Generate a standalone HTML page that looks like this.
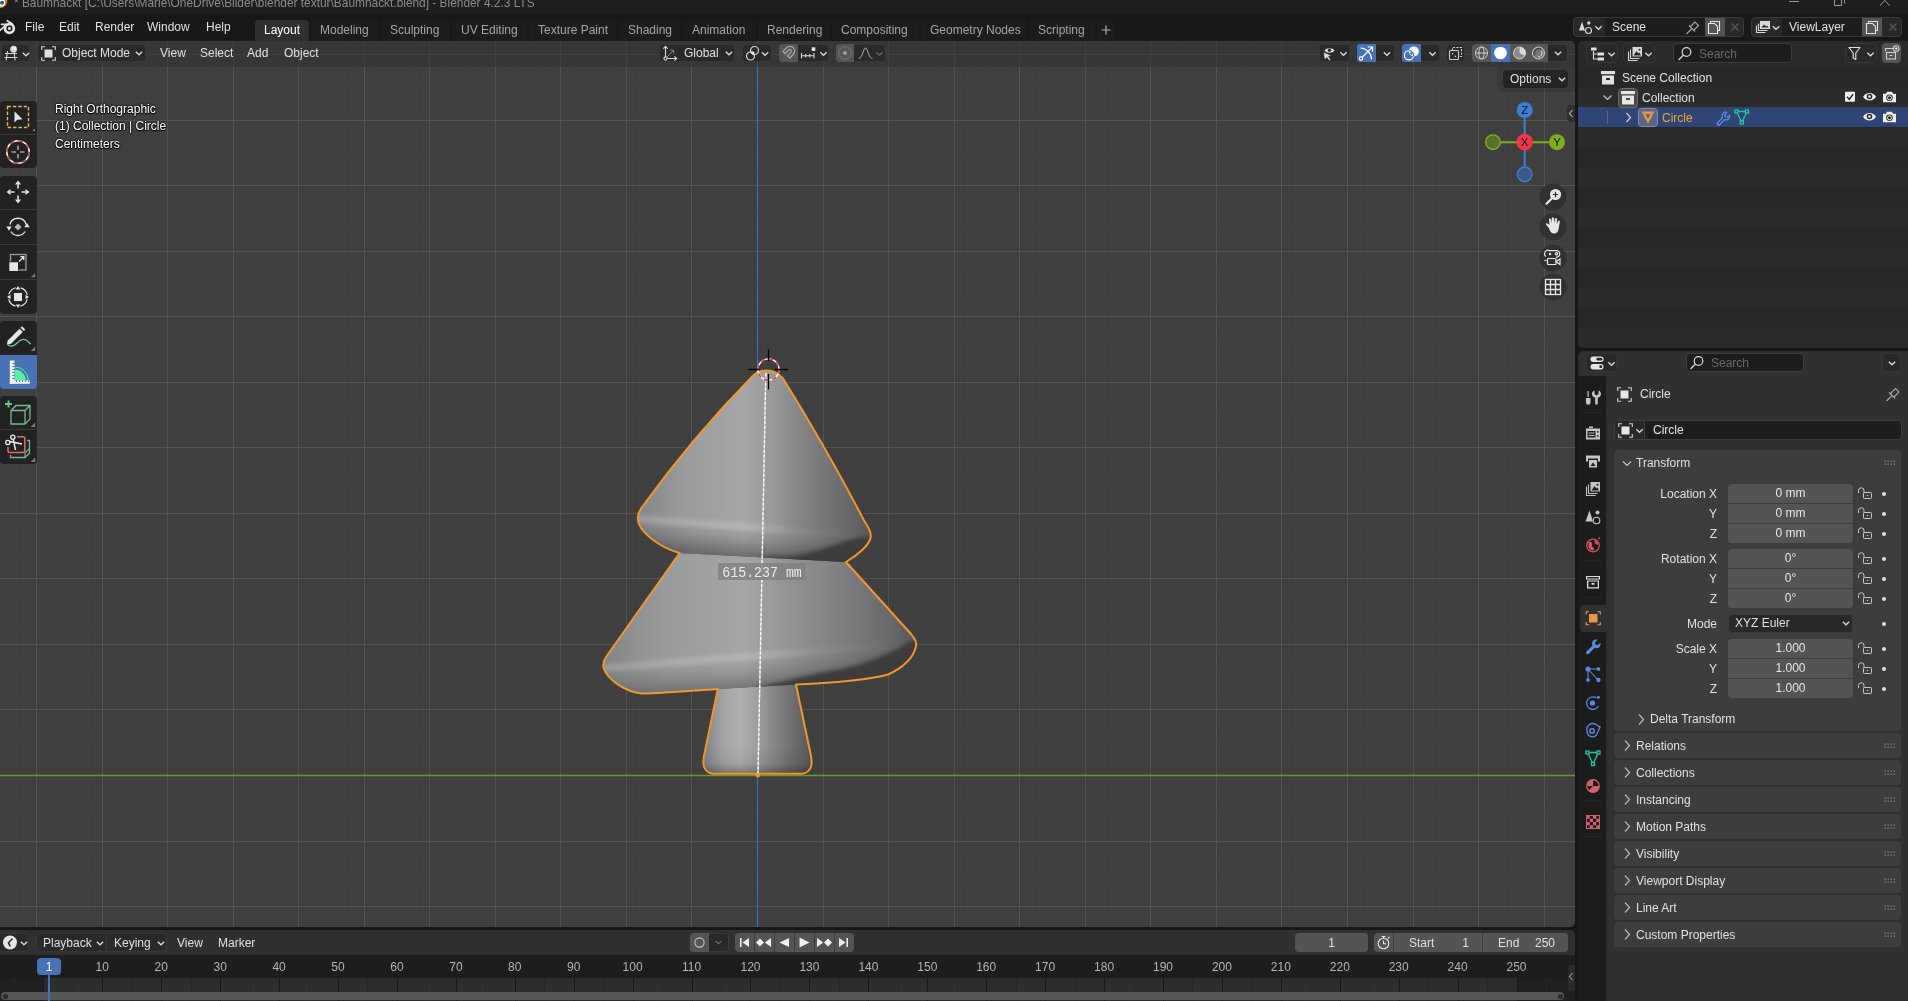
<!DOCTYPE html>
<html>
<head>
<meta charset="utf-8">
<title>Blender</title>
<style>
*{box-sizing:border-box;margin:0;padding:0}
html,body{width:1908px;height:1001px;overflow:hidden;background:#161616}
body{will-change:transform;position:relative;font-family:"Liberation Sans",sans-serif;font-size:12px;color:#e6e6e6;line-height:1}
.abs{position:absolute}
.t{position:absolute;white-space:nowrap;line-height:14px;height:14px;color:#e0e0e0}
.g{color:#989898}
.sep{left:1583px;width:20px;height:1px;background:#262626}
.tabi{top:20px;height:20px;background:#1c1c1c;border-radius:4px 4px 0 0}
.tb{top:23px;color:#a6a6a6}
.tbg{background:#222;border-radius:4px}
.tbl{width:37px;height:1px;background:#3a3a3a}
.ov{color:#fff;text-shadow:0 0 2px #000,0 0 2px #000,0 1px 1px #000}
.btn{position:absolute;background:#292929;border:1px solid #363636;border-radius:4px}
.fld{position:absolute;background:#545454;text-align:center;line-height:19px;height:19px;color:#e6e6e6}
.dark{position:absolute;background:#1d1d1d;border:1px solid #3d3d3d;border-radius:4px}
svg{position:absolute;overflow:visible}
/* title + topbar */
#title{left:0;top:0;width:1908px;height:13.500px;background:#1e1e1e}
#topbar{left:0;top:14px;width:1908px;height:27px;background:#181818}
/* viewport */
#vp{left:0;top:41px;width:1575px;height:886px;background:#3f3f3f;border-radius:0 5px 5px 0;overflow:hidden}
#vphead{left:0;top:0;width:1575px;height:26px;background:rgba(48,48,48,.55)}
/* timeline */
#tl{left:0;top:930px;width:1575px;height:71px;background:#2b2b2b;border-radius:0 5px 0 0;overflow:hidden}
#tlhead{left:0;top:0;width:1575px;height:25px;background:#303030}
#tlruler{left:0;top:25px;width:1575px;height:23px;background:#1d1d1d}
/* outliner */
#ol{left:1578px;top:41px;width:330px;height:307px;background:#282828;border-radius:5px 0 0 5px;overflow:hidden}
#olhead{left:0;top:0;width:330px;height:26px;background:#2a2a2a}
/* properties */
#pr{left:1578px;top:351px;width:330px;height:650px;background:#303030;border-radius:5px 0 0 0;overflow:hidden}
#prtabs{left:0;top:25px;width:28px;height:625px;background:#1c1c1c}
.panel{position:absolute;left:36px;width:287px;height:25px;background:#3d3d3d;border-radius:4px}
</style>
</head>
<body>
<svg width="0" height="0" style="position:absolute"><defs>
<symbol id="chev" overflow="visible"><path d="M.8 .8L4 3.8L7.2 .8" stroke="#dcdcdc" stroke-width="1.3" fill="none"/></symbol>
<symbol id="chevr" overflow="visible"><path d="M1 .5L5.500 5.500L1 10.500" stroke="#b8b8b8" stroke-width="1.200" fill="none"/></symbol>
</defs></svg>
<div id="title" class="abs"></div>
<div id="topbar" class="abs"></div>
<div id="vp" class="abs">
<svg style="left:0;top:0" width="1575" height="886" viewBox="0 41 1575 886">
<path d="M3.5 41V927M10.5 41V927M16.5 41V927M23.5 41V927M29.5 41V927M43.5 41V927M49.5 41V927M56.5 41V927M62.5 41V927M69.5 41V927M75.5 41V927M82.5 41V927M88.5 41V927M95.5 41V927M108.5 41V927M115.5 41V927M121.5 41V927M128.5 41V927M134.5 41V927M141.5 41V927M147.5 41V927M154.5 41V927M160.5 41V927M174.5 41V927M180.5 41V927M187.5 41V927M193.5 41V927M200.5 41V927M206.5 41V927M213.5 41V927M219.5 41V927M226.5 41V927M239.5 41V927M246.5 41V927M252.5 41V927M259.5 41V927M265.5 41V927M272.5 41V927M278.5 41V927M285.5 41V927M292.5 41V927M305.5 41V927M311.5 41V927M318.5 41V927M324.5 41V927M331.5 41V927M337.5 41V927M344.5 41V927M351.5 41V927M357.5 41V927M370.5 41V927M377.5 41V927M383.5 41V927M390.5 41V927M396.5 41V927M403.5 41V927M410.5 41V927M416.5 41V927M423.5 41V927M436.5 41V927M442.5 41V927M449.5 41V927M455.5 41V927M462.5 41V927M469.5 41V927M475.5 41V927M482.5 41V927M488.5 41V927M501.5 41V927M508.5 41V927M514.5 41V927M521.5 41V927M528.5 41V927M534.5 41V927M541.5 41V927M547.5 41V927M554.5 41V927M567.5 41V927M573.5 41V927M580.5 41V927M587.5 41V927M593.5 41V927M600.5 41V927M606.5 41V927M613.5 41V927M619.5 41V927M632.5 41V927M639.5 41V927M646.5 41V927M652.5 41V927M659.5 41V927M665.5 41V927M672.5 41V927M678.5 41V927M685.5 41V927M698.5 41V927M705.5 41V927M711.5 41V927M718.5 41V927M724.5 41V927M731.5 41V927M737.5 41V927M744.5 41V927M750.5 41V927M764.5 41V927M770.5 41V927M777.5 41V927M783.5 41V927M790.5 41V927M796.5 41V927M803.5 41V927M809.5 41V927M816.5 41V927M829.5 41V927M836.5 41V927M842.5 41V927M849.5 41V927M855.5 41V927M862.5 41V927M868.5 41V927M875.5 41V927M882.5 41V927M895.5 41V927M901.5 41V927M908.5 41V927M914.5 41V927M921.5 41V927M927.5 41V927M934.5 41V927M941.5 41V927M947.5 41V927M960.5 41V927M967.5 41V927M973.5 41V927M980.5 41V927M986.5 41V927M993.5 41V927M1000.5 41V927M1006.5 41V927M1013.5 41V927M1026.5 41V927M1032.5 41V927M1039.5 41V927M1045.5 41V927M1052.5 41V927M1059.5 41V927M1065.5 41V927M1072.5 41V927M1078.5 41V927M1091.5 41V927M1098.5 41V927M1104.5 41V927M1111.5 41V927M1118.5 41V927M1124.5 41V927M1131.5 41V927M1137.5 41V927M1144.5 41V927M1157.5 41V927M1163.5 41V927M1170.5 41V927M1177.5 41V927M1183.5 41V927M1190.5 41V927M1196.5 41V927M1203.5 41V927M1209.5 41V927M1222.5 41V927M1229.5 41V927M1236.5 41V927M1242.5 41V927M1249.5 41V927M1255.5 41V927M1262.5 41V927M1268.5 41V927M1275.5 41V927M1288.5 41V927M1295.5 41V927M1301.5 41V927M1308.5 41V927M1314.5 41V927M1321.5 41V927M1327.5 41V927M1334.5 41V927M1340.5 41V927M1354.5 41V927M1360.5 41V927M1367.5 41V927M1373.5 41V927M1380.5 41V927M1386.5 41V927M1393.5 41V927M1399.5 41V927M1406.5 41V927M1419.5 41V927M1426.5 41V927M1432.5 41V927M1439.5 41V927M1445.5 41V927M1452.5 41V927M1458.5 41V927M1465.5 41V927M1471.5 41V927M1485.5 41V927M1491.5 41V927M1498.5 41V927M1504.5 41V927M1511.5 41V927M1517.5 41V927M1524.5 41V927M1530.5 41V927M1537.5 41V927M1550.5 41V927M1557.5 41V927M1563.5 41V927M1570.5 41V927M0 41.5H1575M0 47.5H1575M0 61.5H1575M0 67.5H1575M0 74.5H1575M0 80.5H1575M0 87.5H1575M0 93.5H1575M0 100.5H1575M0 106.5H1575M0 113.5H1575M0 126.5H1575M0 133.5H1575M0 139.5H1575M0 146.5H1575M0 152.5H1575M0 159.5H1575M0 165.5H1575M0 172.5H1575M0 178.5H1575M0 192.5H1575M0 198.5H1575M0 205.5H1575M0 211.5H1575M0 218.5H1575M0 224.5H1575M0 231.5H1575M0 237.5H1575M0 244.5H1575M0 257.5H1575M0 264.5H1575M0 270.5H1575M0 277.5H1575M0 283.5H1575M0 290.5H1575M0 296.5H1575M0 303.5H1575M0 310.5H1575M0 323.5H1575M0 329.5H1575M0 336.5H1575M0 342.5H1575M0 349.5H1575M0 355.5H1575M0 362.5H1575M0 369.5H1575M0 375.5H1575M0 388.5H1575M0 395.5H1575M0 401.5H1575M0 408.5H1575M0 414.5H1575M0 421.5H1575M0 428.5H1575M0 434.5H1575M0 441.5H1575M0 454.5H1575M0 460.5H1575M0 467.5H1575M0 473.5H1575M0 480.5H1575M0 487.5H1575M0 493.5H1575M0 500.5H1575M0 506.5H1575M0 519.5H1575M0 526.5H1575M0 532.5H1575M0 539.5H1575M0 546.5H1575M0 552.5H1575M0 559.5H1575M0 565.5H1575M0 572.5H1575M0 585.5H1575M0 591.5H1575M0 598.5H1575M0 605.5H1575M0 611.5H1575M0 618.5H1575M0 624.5H1575M0 631.5H1575M0 637.5H1575M0 650.5H1575M0 657.5H1575M0 664.5H1575M0 670.5H1575M0 677.5H1575M0 683.5H1575M0 690.5H1575M0 696.5H1575M0 703.5H1575M0 716.5H1575M0 723.5H1575M0 729.5H1575M0 736.5H1575M0 742.5H1575M0 749.5H1575M0 755.5H1575M0 762.5H1575M0 768.5H1575M0 782.5H1575M0 788.5H1575M0 795.5H1575M0 801.5H1575M0 808.5H1575M0 814.5H1575M0 821.5H1575M0 827.5H1575M0 834.5H1575M0 847.5H1575M0 854.5H1575M0 860.5H1575M0 867.5H1575M0 873.5H1575M0 880.5H1575M0 886.5H1575M0 893.5H1575M0 900.5H1575M0 913.5H1575M0 919.5H1575M0 926.5H1575" stroke="#414141" stroke-width="1" fill="none" shape-rendering="crispEdges"/>
<path d="M36.5 41V927M102.5 41V927M167.5 41V927M233.5 41V927M298.5 41V927M364.5 41V927M429.5 41V927M495.5 41V927M560.5 41V927M626.5 41V927M691.5 41V927M823.5 41V927M888.5 41V927M954.5 41V927M1019.5 41V927M1085.5 41V927M1150.5 41V927M1216.5 41V927M1281.5 41V927M1347.5 41V927M1413.5 41V927M1478.5 41V927M1544.5 41V927M0 54.5H1575M0 120.5H1575M0 185.5H1575M0 251.5H1575M0 316.5H1575M0 382.5H1575M0 447.5H1575M0 513.5H1575M0 578.5H1575M0 644.5H1575M0 709.5H1575M0 841.5H1575M0 906.5H1575" stroke="#535353" stroke-width="1" fill="none" shape-rendering="crispEdges"/>
<path d="M0 775.5H1575" stroke="#6a9a22" stroke-width="1.3" fill="none"/>
<path d="M757.5 41V927" stroke="#3a6db3" stroke-width="1.3" fill="none"/>
<defs>
<linearGradient id="gU" gradientUnits="userSpaceOnUse" x1="637" y1="0" x2="871" y2="0">
<stop offset="0" stop-color="#858688"/><stop offset=".2" stop-color="#999a9c"/><stop offset=".45" stop-color="#a6a7a9"/><stop offset=".58" stop-color="#98999b"/><stop offset=".75" stop-color="#7d7d80"/><stop offset=".92" stop-color="#666669"/><stop offset="1" stop-color="#58585b"/>
</linearGradient>
<linearGradient id="gL" gradientUnits="userSpaceOnUse" x1="603" y1="0" x2="916" y2="0">
<stop offset="0" stop-color="#848587"/><stop offset=".2" stop-color="#999a9c"/><stop offset=".45" stop-color="#a5a6a8"/><stop offset=".56" stop-color="#97989a"/><stop offset=".75" stop-color="#808083"/><stop offset=".92" stop-color="#69696c"/><stop offset="1" stop-color="#58585b"/>
</linearGradient>
<linearGradient id="gT" gradientUnits="userSpaceOnUse" x1="703" y1="0" x2="812" y2="0">
<stop offset="0" stop-color="#7e7f82"/><stop offset=".18" stop-color="#a2a3a5"/><stop offset=".34" stop-color="#b0b1b3"/><stop offset=".5" stop-color="#9d9ea0"/><stop offset=".72" stop-color="#7c7c7f"/><stop offset=".92" stop-color="#626265"/><stop offset="1" stop-color="#545457"/>
</linearGradient>
<linearGradient id="gRimU" gradientUnits="userSpaceOnUse" x1="754" y1="503" x2="750" y2="556">
<stop offset="0" stop-color="#000" stop-opacity="0"/><stop offset=".5" stop-color="#000" stop-opacity="0"/><stop offset=".7" stop-color="#000" stop-opacity=".1"/><stop offset="1" stop-color="#000" stop-opacity=".33"/>
</linearGradient>
<linearGradient id="gHiU" gradientUnits="userSpaceOnUse" x1="637" y1="0" x2="850" y2="0"><stop offset="0" stop-color="#fff" stop-opacity=".5"/><stop offset=".5" stop-color="#fff" stop-opacity=".55"/><stop offset=".75" stop-color="#fff" stop-opacity=".15"/><stop offset="1" stop-color="#fff" stop-opacity="0"/></linearGradient>
<linearGradient id="gHiL" gradientUnits="userSpaceOnUse" x1="603" y1="0" x2="900" y2="0"><stop offset="0" stop-color="#fff" stop-opacity=".5"/><stop offset=".5" stop-color="#fff" stop-opacity=".55"/><stop offset=".75" stop-color="#fff" stop-opacity=".15"/><stop offset="1" stop-color="#fff" stop-opacity="0"/></linearGradient>
<filter id="bl2" x="-10%" y="-30%" width="120%" height="160%"><feGaussianBlur stdDeviation="2.200"/></filter>
<filter id="bl" x="-10%" y="-300%" width="120%" height="700%"><feGaussianBlur stdDeviation="2.600"/></filter>
<linearGradient id="gRimL" gradientUnits="userSpaceOnUse" x1="757" y1="632" x2="761.6" y2="690">
<stop offset="0" stop-color="#000" stop-opacity="0"/><stop offset=".45" stop-color="#000" stop-opacity="0"/><stop offset=".68" stop-color="#000" stop-opacity=".1"/><stop offset="1" stop-color="#000" stop-opacity=".33"/>
</linearGradient>
<radialGradient id="gDkU" gradientUnits="userSpaceOnUse" cx="866" cy="549" r="58" gradientTransform="translate(866 549) scale(1 .45) translate(-866 -549)">
<stop offset="0" stop-color="#2e2a2a" stop-opacity=".85"/><stop offset=".5" stop-color="#2e2a2a" stop-opacity=".5"/><stop offset="1" stop-color="#2e2a2a" stop-opacity="0"/>
</radialGradient>
<radialGradient id="gDkL" gradientUnits="userSpaceOnUse" cx="908" cy="668" r="70" gradientTransform="translate(905 668) rotate(-18) scale(1 .4) translate(-905 -668)">
<stop offset="0" stop-color="#2e2a2a" stop-opacity=".85"/><stop offset=".5" stop-color="#2e2a2a" stop-opacity=".5"/><stop offset="1" stop-color="#2e2a2a" stop-opacity="0"/>
</radialGradient>
<linearGradient id="gTb" gradientUnits="userSpaceOnUse" x1="0" y1="745" x2="0" y2="775">
<stop offset="0" stop-color="#000" stop-opacity="0"/><stop offset=".6" stop-color="#000" stop-opacity=".06"/><stop offset="1" stop-color="#000" stop-opacity=".35"/>
</linearGradient>
<clipPath id="cU"><path id="pU" d="M752.5 376.3C757 371.5 762 370.5 766.4 370.5C772 370.500 778 373 783 378.500Q826 447.400 863.5 519.5C868 527 872 533 870.5 538C869 545 858 555 846 562L679.6 553C665 549 650 540 641 528C636.5 521 636.5 515 641 508.5Q692.500 437.200 752.5 376.3Z"/></clipPath>
<clipPath id="cL"><path id="pL" d="M679.6 553L846 562L911 634C915 639 917.5 643 915.5 648C913 658 903 668 888 674.5C870 679.5 830 683 796 684.5L717.8 689C690 691 660 693.5 642 693.5C625 692 608 680 603.5 668C602.5 663 604 660 606 657Z"/></clipPath>
</defs>
<!-- trunk -->
<path d="M717.8 689L796 684.5L811 756C812.5 764 812 772 802 773.8L713 773.8C703 772 702.5 764 704 756Z" fill="url(#gT)"/>
<path d="M717.8 689L796 684.5L811 756C812.5 764 812 772 802 773.8L713 773.8C703 772 702.5 764 704 756Z" fill="url(#gTb)"/>
<!-- lower cone -->
<use href="#pL" fill="url(#gL)"/>
<g clip-path="url(#cL)">
<rect x="598" y="600" width="325" height="100" fill="url(#gRimL)"/>
<path d="M600 668.300L890 645.200" stroke="url(#gHiL)" stroke-width="6" fill="none" filter="url(#bl)" opacity=".4"/>
<path d="M920 640L909 641.500L900 647.500L880 657L860 664.500L840 669.500L820 673L800 677.500L780 682.500L755 688L755 700L925 700Z" fill="#3d3a3a" filter="url(#bl2)"/>
</g>
<!-- upper cone -->
<use href="#pU" fill="url(#gU)"/>
<g clip-path="url(#cU)">
<rect x="630" y="480" width="250" height="90" fill="url(#gRimU)"/>
<path d="M634 518.400L850 534.200" stroke="url(#gHiU)" stroke-width="6" fill="none" filter="url(#bl)" opacity=".4"/>
<path d="M874 536L856 538.300L840 543L824 548.800L808 553.500L788 556.800L760 557.800L760 566L880 566Z" fill="#3d3a3a" filter="url(#bl2)"/>
</g>
<!-- outline -->
<path d="M752.5 376.3C757 371.5 762 370.5 766.4 370.5C772 370.500 778 373 783 378.500Q826 447.400 863.5 519.5C868 527 872 533 870.5 538C869 545 858 555 846 562L911 634C915 639 917.5 643 915.5 648C913 658 903 668 888 674.5C870 679.5 830 683 796 684.5L811 756C812.5 764 812 772 802 773.8L713 773.8C703 772 702.5 764 704 756L717.8 689C690 691 660 693.5 642 693.5C625 692 608 680 603.5 668C602.5 663 604 660 606 657L679.6 553C665 549 650 540 641 528C636.5 521 636.5 515 641 508.5Q692.500 437.200 752.5 376.3Z" fill="none" stroke="#f0962a" stroke-width="2" stroke-linejoin="round"/>
<!-- measure line -->
<path d="M765.8 373L758 775" stroke="#c4c4c4" stroke-width="1.300" fill="none"/>
<path d="M765.8 373L758 775" stroke="#fff" stroke-width="1.300" stroke-dasharray="3.200 1.600" fill="none"/>
<circle cx="757.8" cy="775.3" r="2.2" fill="#f0962a"/>
<!-- 3d cursor -->
<circle cx="768.5" cy="369.5" r="10.6" fill="none" stroke="#fff" stroke-width="1.4"/>
<circle cx="768.5" cy="369.5" r="10.6" fill="none" stroke="#e2333d" stroke-width="1.4" stroke-dasharray="4.16 4.16"/>
<path d="M748.5 369.5H759.5M774.5 369.5H788M768.5 349.5V361M768.5 374V389.5" stroke="#000" stroke-width="1.3" fill="none"/>
<!-- label -->
<rect x="718" y="563" width="87.5" height="17" fill="#7f7f7f" fill-opacity=".8"/>
<text x="722.3" y="576.6" font-family="Liberation Mono, monospace" font-size="15" fill="#ececec" textLength="79.5" lengthAdjust="spacingAndGlyphs">615.237 mm</text>

</svg>
<div id="vphead" class="abs"></div>
<div class="abs" style="left:0;top:-41px;width:0;height:0">
<!-- header left -->
<div class="btn" style="left:1px;top:44px;width:29px;height:18px"></div>
<svg style="left:4px;top:45px" width="26" height="17" viewBox="0 0 26 17"><g stroke="#d8d8d8" stroke-width="1.1" fill="none"><path d="M1 8.5H13M0.5 12.5H13.5M3.5 6L2.2 15.5M9.8 6L11.2 15.5"/></g><circle cx="9.6" cy="4.2" r="3.4" fill="#d8d8d8"/><circle cx="10.6" cy="3.2" r="1.3" fill="#fff"/><use href="#chev" x="18" y="7"/></svg>
<div class="btn" style="left:37px;top:44px;width:109px;height:18px"></div>
<svg style="left:41px;top:46px" width="15" height="15" viewBox="0 0 15 15"><rect x="3.5" y="3.5" width="8" height="8" fill="#e0e0e0"/><path d="M.7 4V.7H4M11 .7H14.3V4M14.3 11V14.3H11M4 14.3H.7V11" stroke="#d8d8d8" stroke-width="1.1" fill="none"/></svg>
<div class="t" style="left:62px;top:46px">Object Mode</div>
<svg style="left:135px;top:51px" width="8" height="5"><use href="#chev"/></svg>
<div class="t" style="left:160px;top:46px">View</div>
<div class="t" style="left:200px;top:46px">Select</div>
<div class="t" style="left:247px;top:46px">Add</div>
<div class="t" style="left:284px;top:46px">Object</div>
<!-- header center -->
<div class="btn" style="left:659px;top:44px;width:76px;height:18px"></div>
<svg style="left:662px;top:45px" width="18" height="17" viewBox="0 0 18 17"><g stroke="#d8d8d8" stroke-width="1.1" fill="none"><path d="M3.5 12V1.5M1.3 3.7L3.5 1.3L5.7 3.7M5 13.5H14.5M12.3 11.3L14.7 13.5L12.3 15.7"/><circle cx="3.5" cy="13.5" r="1.6"/></g><path d="M5 12L11.5 5.5M8.5 5.3H11.7V8.5" stroke="#8a8a8a" stroke-width="1" fill="none"/></svg>
<div class="t" style="left:684px;top:46px">Global</div>
<svg style="left:725px;top:51px" width="8" height="5"><use href="#chev"/></svg>
<div class="btn" style="left:742px;top:44px;width:30px;height:18px"></div>
<svg style="left:745px;top:45px" width="26" height="17" viewBox="0 0 26 17"><g stroke="#d8d8d8" stroke-width="1.2" fill="none"><circle cx="9.5" cy="5.5" r="4"/><circle cx="5.5" cy="11" r="4"/></g><circle cx="7.8" cy="7.8" r="1.6" fill="#e8e8e8"/><use href="#chev" x="16" y="6.5"/></svg>
<div class="btn" style="left:779px;top:44px;width:50px;height:18px"></div>
<div class="abs" style="left:779px;top:44px;width:19px;height:18px;background:#555;border-radius:4px 0 0 4px"></div>
<svg style="left:780px;top:45px" width="48" height="17" viewBox="0 0 48 17"><path d="M3 6.5L6.5 2.8A4.6 4.6 0 0 1 13.3 9.2L9.8 13L7.5 11L11 7.2A1.6 1.6 0 0 0 8.7 5L5.2 8.7Z" stroke="#a4a4a4" stroke-width="1.300" fill="none"/><g stroke="#d8d8d8" stroke-width="1.1" fill="none"><path d="M21.5 8V13.5M21.5 10.8H34M34 8V13.5M25.7 9V12.6M29.8 9V12.6"/></g><rect x="31.7" y="2.3" width="3.6" height="3.6" fill="#e8e8e8"/><use href="#chev" x="39.5" y="6.5"/></svg>
<div class="btn" style="left:836px;top:44px;width:50px;height:18px"></div>
<div class="abs" style="left:836px;top:44px;width:18px;height:18px;background:#555;border-radius:4px 0 0 4px"></div>
<svg style="left:836px;top:45px" width="50" height="17" viewBox="0 0 50 17"><circle cx="9" cy="8" r="6.3" stroke="#7a7a7a" stroke-width="1" fill="none"/><circle cx="9" cy="8" r="2" fill="#a0a0a0"/><path d="M22.5 13.5C27 13.5 27 3 29.5 3C32 3 32 13.5 36.5 13.5" stroke="#9a9a9a" stroke-width="1.1" fill="none"/><path d="M40.5 7.5L43.5 10.3L46.5 7.5" stroke="#6a6a6a" stroke-width="1.2" fill="none"/></svg>
<!-- header right -->
<div class="btn" style="left:1319px;top:44px;width:31px;height:18px"></div>
<svg style="left:1321px;top:45px" width="28" height="17" viewBox="0 0 28 17"><path d="M3.5 5.5C5.5 2.5 11.5 2.5 13.5 5.5C11.5 8.5 5.5 8.5 3.5 5.5Z" fill="#e0e0e0"/><circle cx="8.5" cy="5.3" r="1.7" fill="#282828"/><path d="M2.5 7L3.5 15L5.8 12.6L8.3 15.8L9.8 14.7L7.5 11.6L10.5 10.8Z" fill="#e0e0e0" stroke="#282828" stroke-width=".6"/><use href="#chev" x="18.5" y="6.5"/></svg>
<div class="btn" style="left:1356px;top:44px;width:39px;height:18px"></div>
<div class="abs" style="left:1357px;top:44px;width:19px;height:18px;background:#4772b3;border-radius:3px 0 0 3px"></div>
<svg style="left:1357px;top:45px" width="38" height="17" viewBox="0 0 38 17"><g stroke="#fff" stroke-width="1.200" fill="none"><path d="M3.500 3A11.500 11.500 0 0 1 14.500 14.500M5 12.500L15.300 2.200M10.800 2H15.500V6.700"/><circle cx="4" cy="13.500" r="1.700" fill="#4772b3"/></g><use href="#chev" x="26" y="6.500"/></svg>
<div class="btn" style="left:1401px;top:44px;width:39px;height:18px"></div>
<div class="abs" style="left:1402px;top:44px;width:19px;height:18px;background:#4772b3;border-radius:3px 0 0 3px"></div>
<svg style="left:1402px;top:45px" width="38" height="17" viewBox="0 0 38 17"><defs><clipPath id="ovc"><circle cx="11.800" cy="6.400" r="5"/></clipPath></defs><circle cx="7" cy="10.300" r="4.600" fill="none" stroke="#fff" stroke-width="1.200"/><circle cx="11.800" cy="6.400" r="5" fill="#fff"/><circle cx="7" cy="10.300" r="4.600" fill="#4772b3" fill-opacity=".0" stroke="#4772b3" stroke-width="1.300" clip-path="url(#ovc)"/><circle cx="9.200" cy="8.500" r="1.300" fill="#4772b3"/><use href="#chev" x="26.500" y="6.500"/></svg>
<div class="btn" style="left:1446px;top:44px;width:19px;height:18px"></div>
<svg style="left:1447px;top:45px" width="17" height="17" viewBox="0 0 17 17"><g stroke="#d0d0d0" stroke-width="1.1" fill="none"><path d="M5.5 5.5V2.5H14.5V11.5H11.5" stroke-dasharray="2.2 1.2"/><rect x="2.5" y="5.5" width="9" height="9" rx="1"/></g><circle cx="5.6" cy="8.6" r=".8" fill="#d0d0d0"/><circle cx="8.4" cy="11.4" r=".8" fill="#d0d0d0"/></svg>
<div class="abs" style="left:1472px;top:44px;width:96px;height:18px;background:#555;border-radius:4px"></div>
<div class="abs" style="left:1491px;top:44px;width:19px;height:18px;background:#4772b3"></div>
<div class="abs" style="left:1548px;top:44px;width:20px;height:18px;background:#282828;border:1px solid #3a3a3a;border-left:0;border-radius:0 4px 4px 0"></div>
<svg style="left:1472px;top:44px" width="96" height="18" viewBox="0 0 96 18"><g stroke="#d0d0d0" stroke-width="1" fill="none"><circle cx="9.5" cy="9" r="6"/><ellipse cx="9.5" cy="9" rx="2.6" ry="6"/><path d="M3.5 9H15.5"/></g><circle cx="28.5" cy="9" r="6.3" fill="#fff"/><circle cx="47.5" cy="9" r="6" fill="#8a8a8a" stroke="#cfcfcf" stroke-width="1"/><path d="M47.5 9V3A6 6 0 0 1 52.7 12Z" fill="#d8d8d8"/><circle cx="66.5" cy="9" r="6" fill="#777" stroke="#cfcfcf" stroke-width="1"/><path d="M62.5 11.5A5 5 0 0 1 69 5" stroke="#444" stroke-width="1.4" fill="none"/><path d="M69.5 7A4 4 0 0 1 66 13" stroke="#ddd" stroke-width="1" fill="none"/><use href="#chev" x="82" y="7"/></svg>
<div class="abs" style="left:1431px;top:41px;width:1px;height:0"></div>
<!-- options -->
<div class="abs" style="left:1497px;top:66px;width:78px;height:26px;background:rgba(48,48,48,.45);border-radius:0 0 0 6px"></div>
<div class="abs" style="left:1503px;top:70px;width:65px;height:18px;background:#242424;border-radius:4px"></div>
<div class="t" style="left:1510px;top:72px">Options</div>
<svg style="left:1558px;top:77px" width="8" height="5"><use href="#chev"/></svg>
<!-- sidebar toggle -->
<div class="abs" style="left:1567px;top:105px;width:8px;height:17px;background:#2e2e2e;border-radius:4px 0 0 4px"></div>
<svg style="left:1568px;top:109px" width="6" height="9"><path d="M4.5 1L1.5 4.5L4.5 8" stroke="#bbb" stroke-width="1.1" fill="none"/></svg>
<!-- text overlay -->
<div class="t ov" style="left:55px;top:101.500px">Right Orthographic</div>
<div class="t ov" style="left:55px;top:119px">(1) Collection | Circle</div>
<div class="t ov" style="left:55px;top:137px">Centimeters</div>
<!-- toolbar groups -->
<div class="abs tbg" style="left:0px;top:101px;width:37px;height:67px"></div>
<div class="abs tbl" style="left:0px;top:134px"></div>
<div class="abs tbg" style="left:0px;top:176px;width:37px;height:138px"></div>
<div class="abs tbl" style="left:0px;top:209px"></div><div class="abs tbl" style="left:0px;top:244px"></div><div class="abs tbl" style="left:0px;top:279px"></div>
<div class="abs tbg" style="left:0px;top:321px;width:37px;height:68px"></div>
<div class="abs" style="left:0px;top:355px;width:37px;height:34px;background:#4772b3;border-radius:0 0 4px 4px"></div>
<div class="abs tbg" style="left:0px;top:396px;width:37px;height:68px"></div>
<div class="abs tbl" style="left:0px;top:429px"></div>
<svg style="left:0;top:0" width="40" height="470" viewBox="0 0 40 470">
<!-- select box -->
<rect x="7.5" y="106.5" width="21" height="21" fill="none" stroke="#e8b55a" stroke-width="1.4" stroke-dasharray="3.4 2"/>
<path d="M14.5 111.5L14.5 122.5L17.3 119.8L22.5 119.3Z" fill="#e6e6e6"/>
<path d="M35 128.5V131H32.5Z" fill="#8a8a8a"/>
<!-- cursor -->
<circle cx="18" cy="152" r="11.2" fill="none" stroke="#f0f0f0" stroke-width="1.5"/>
<circle cx="18" cy="152" r="11.2" fill="none" stroke="#b43c3c" stroke-width="1.5" stroke-dasharray="4.4 4.4"/>
<path d="M18 145.5V150M18 154V158.5M11.5 152H16M20 152H24.5" stroke="#a0a0a0" stroke-width="1.6"/>
<!-- move -->
<g fill="#e6e6e6"><path d="M18 180.5L21 184.5H15ZM18 203.5L21 199.500H15ZM6.500 192L10.500 189V195ZM29.500 192L25.500 189V195Z"/></g>
<path d="M18 184.500V188.500M18 195.500V199.500M10.500 192H14.500M21.500 192H25.500" stroke="#e6e6e6" stroke-width="1.600"/>
<!-- rotate -->
<path d="M9.800 224.500A8.500 8.500 0 0 1 26.200 224.500M10.800 231.500A8.500 8.500 0 0 0 25.200 231.500" stroke="#e6e6e6" stroke-width="1.300" fill="none"/>
<path d="M6.300 226.500L11.700 226.500L9 230.800ZM24.300 227.300L29.700 227.300L27 223Z" fill="#e6e6e6"/>
<path d="M18 223.500L21.500 227L18 230.500L14.500 227Z" fill="#b8b8b8"/>
<!-- scale -->
<rect x="10.500" y="254.500" width="15.500" height="15.500" fill="none" stroke="#9c9c9c" stroke-width="1.300"/>
<rect x="8.500" y="261.500" width="10" height="10" fill="#222"/>
<rect x="9.300" y="262.300" width="8.700" height="8.700" fill="#e6e6e6"/>
<path d="M19 261.500L23.500 257M20.300 256.700H23.800V260.200" stroke="#e6e6e6" stroke-width="1.200" fill="none"/>
<path d="M35.200 273.200V277.300H30.700Z" fill="#7a7a7a"/>
<!-- transform -->
<circle cx="18" cy="297" r="9.500" fill="none" stroke="#e6e6e6" stroke-width="1.200" stroke-dasharray="9.920 5" stroke-dashoffset="-2.500"/>
<rect x="14" y="293" width="8" height="8" fill="#e6e6e6"/>
<g fill="#e6e6e6"><path d="M18 286L20.300 289.500H15.700ZM18 308L20.300 304.500H15.700ZM7 297L10.500 294.700V299.300ZM29 297L25.500 294.700V299.300Z"/></g>
<!-- annotate -->
<path d="M7.800 340.500L19.500 328.800L22.800 332.100L11.100 343.800L6.800 344.800Z" fill="#e6e6e6"/><path d="M20.500 327.800L22 326.300L25.300 329.600L23.800 331.100Z" fill="#e6e6e6"/>
<path d="M7.500 344.500C10 347 13.500 346.500 16.500 343.500C19.500 340.500 23 338 26 340C28 341.300 29.500 343 30.500 344" stroke="#7fc7a0" stroke-width="1.300" fill="none"/>
<path d="M35.200 346.400V350.900H30.700Z" fill="#7a7a7a"/>
<!-- measure -->
<path d="M14.800 380.500V369.500A11 11 0 0 1 25.800 380.500Z" fill="#58f0a2"/>
<path d="M14.800 367A13.500 13.500 0 0 1 28.300 380.500" stroke="#58f0a2" stroke-width="1" fill="none"/>
<rect x="9.800" y="360.500" width="4.700" height="23.300" fill="#f4f4f4"/>
<rect x="9.800" y="380.300" width="20" height="3.500" fill="#f4f4f4"/>
<path d="M12.300 363.500H14.500M12.300 366.500H14.500M12.300 369.500H14.500M12.300 372.500H14.500M12.300 375.500H14.500M12.300 378.500H14.500" stroke="#4772b3" stroke-width="1"/>
<path d="M16.500 380.300V382M19.500 380.300V382M22.500 380.300V382M25.500 380.300V382M28.500 380.300V382" stroke="#4772b3" stroke-width="1"/>
<!-- add cube -->
<path d="M11 410.500L16 405.500H30V419L25 424H11Z M11 410.500H25V424M25 410.500L30 405.500" stroke="#79b791" stroke-width="1.300" fill="none"/>
<path d="M5 404H12M8.500 400.500V407.500" stroke="#5fd08a" stroke-width="1.800"/>
<path d="M35.200 422.4V426.9H30.700Z" fill="#7a7a7a"/>
<!-- extrude/ region tool -->
<path d="M10.500 455V457.500H25L29.500 453V440.500H27" stroke="#79b791" stroke-width="1.300" fill="none"/>
<path d="M25 457.500V453M25 453L29.500 448.500" stroke="#79b791" stroke-width="1.100" fill="none"/>
<path d="M17 436.800H23A1.800 1.800 0 0 1 24.800 438.600V450.600A1.800 1.800 0 0 1 23 452.400H9.800A1.800 1.800 0 0 1 8 450.600V447" stroke="#d87068" stroke-width="1.500" fill="none"/>
<circle cx="7.800" cy="442.500" r="2.100" stroke="#f0f0f0" stroke-width="1.300" fill="none"/><circle cx="12.800" cy="437.300" r="2.100" stroke="#f0f0f0" stroke-width="1.300" fill="none"/>
<path d="M9.800 441.500L22 444M13.300 439.300L15.500 450" stroke="#f0f0f0" stroke-width="1.400"/>
<path d="M35.200 457.400V461.900H30.700Z" fill="#7a7a7a"/>
</svg>

<svg style="left:0;top:0" width="1575" height="330" viewBox="0 0 1575 330">
<path d="M1524.700 118V166" stroke="#3d7fd6" stroke-width="2"/>
<path d="M1501 142.200H1549" stroke="#7cb11b" stroke-width="2"/>
<circle cx="1493" cy="142.200" r="7.300" fill="#55702e" stroke="#7cb11b" stroke-width="1.400"/>
<circle cx="1524.700" cy="174.300" r="7.300" fill="#3a5987" stroke="#3d7fd6" stroke-width="1.400"/>
<circle cx="1524.700" cy="110.100" r="8" fill="#3d7fd6"/>
<circle cx="1557" cy="142.200" r="8" fill="#7cb11b"/>
<circle cx="1524.700" cy="142.200" r="8.300" fill="#f4344f"/>
<g font-family="Liberation Sans, sans-serif" font-size="11.500" text-anchor="middle" fill="#111">
<text x="1524.700" y="114">Z</text><text x="1557" y="146.100">Y</text><text x="1524.700" y="146.200">X</text></g>
<g fill="#2c2c2c" fill-opacity=".78"><circle cx="1553" cy="197" r="13.500"/><circle cx="1553" cy="226.700" r="13.500"/><circle cx="1553" cy="258" r="13.500"/><circle cx="1553" cy="287" r="13.500"/></g>
<!-- zoom -->
<circle cx="1555.500" cy="194.500" r="5.600" fill="#e8e8e8"/><path d="M1551.500 198.700L1546.500 203.700" stroke="#e8e8e8" stroke-width="2.200" stroke-linecap="round"/><path d="M1552.800 194.500H1558.200M1555.500 191.800V197.200" stroke="#2c2c2c" stroke-width="1.200"/>
<!-- hand -->
<path d="M1548.500 227.500C1547 225.500 1545.500 224.500 1546 223.500C1547 222.500 1548.500 224 1549.500 225L1549 219.500C1549 218 1550.800 218 1551 219.500L1551.500 223.500L1551.800 218.300C1552 216.800 1553.800 216.800 1554 218.300L1554.200 223.500L1555 219C1555.300 217.600 1557 217.800 1557 219.300L1556.800 224L1558 221.200C1558.600 220 1560.200 220.500 1559.800 222L1558.800 227.500C1558.500 231 1557.500 233.500 1554 233.500C1551 233.500 1550 230.500 1548.500 227.500Z" fill="#e8e8e8"/>
<!-- camera -->
<g stroke="#e8e8e8" stroke-width="1.200" fill="none"><rect x="1547.500" y="258.500" width="8.500" height="6" rx=".8"/><path d="M1556 261.500L1560 259V264.500Z"/><path d="M1546 256.500A3.400 3.400 0 0 1 1549.500 250.700H1556A3.200 3.200 0 1 1 1556 257"/><circle cx="1550" cy="254" r=".6"/><circle cx="1556.500" cy="253.800" r="1.100"/><path d="M1546.500 260.500H1544.500"/></g>
<!-- grid -->
<g stroke="#e8e8e8" stroke-width="1.300" fill="none"><rect x="1545.500" y="279.500" width="15" height="15"/><path d="M1550.500 279.500V294.500M1555.500 279.500V294.500M1545.500 284.500H1560.500M1545.500 289.500H1560.500"/></g>
</svg>

</div>

</div>
<div id="tl" class="abs">
<div id="tlhead" class="abs"></div>
<div id="tlruler" class="abs"></div>
<div class="abs" style="left:0;top:-930px;width:0;height:0">
<div class="abs" style="left:0;top:978px;width:1575px;height:23px;background:#2d2d2d"></div>
<div class="abs" style="left:0;top:978px;width:43.4px;height:23px;background:#202020"></div>
<div class="abs" style="left:1517.0px;top:978px;width:58.5px;height:23px;background:#202020"></div>
<svg style="left:0;top:930px" width="1575" height="71" viewBox="0 930 1575 71"><path d="M14.5 978V1001M73.5 978V1001M132.5 978V1001M191.5 978V1001M250.5 978V1001M309.5 978V1001M367.5 978V1001M426.5 978V1001M485.5 978V1001M544.5 978V1001M603.5 978V1001M662.5 978V1001M721.5 978V1001M780.5 978V1001M839.5 978V1001M898.5 978V1001M957.5 978V1001M1016.5 978V1001M1075.5 978V1001M1134.5 978V1001M1192.5 978V1001M1251.5 978V1001M1310.5 978V1001M1369.5 978V1001M1428.5 978V1001M1487.5 978V1001M1546.5 978V1001" stroke="#262626" stroke-width="1" shape-rendering="crispEdges"/><path d="M43.5 978V1001M102.5 978V1001M161.5 978V1001M220.5 978V1001M279.5 978V1001M338.5 978V1001M397.5 978V1001M456.5 978V1001M515.5 978V1001M574.5 978V1001M633.5 978V1001M692.5 978V1001M750.5 978V1001M809.5 978V1001M868.5 978V1001M927.5 978V1001M986.5 978V1001M1045.5 978V1001M1104.5 978V1001M1163.5 978V1001M1222.5 978V1001M1281.5 978V1001M1340.5 978V1001M1399.5 978V1001M1458.5 978V1001M1517.5 978V1001M1575.5 978V1001" stroke="#171717" stroke-width="1" shape-rendering="crispEdges"/></svg>
<div class="t" style="left:82.3px;top:960px;width:40px;text-align:center;color:#b4b4b4">10</div>
<div class="t" style="left:141.2px;top:960px;width:40px;text-align:center;color:#b4b4b4">20</div>
<div class="t" style="left:200.2px;top:960px;width:40px;text-align:center;color:#b4b4b4">30</div>
<div class="t" style="left:259.1px;top:960px;width:40px;text-align:center;color:#b4b4b4">40</div>
<div class="t" style="left:318.0px;top:960px;width:40px;text-align:center;color:#b4b4b4">50</div>
<div class="t" style="left:376.9px;top:960px;width:40px;text-align:center;color:#b4b4b4">60</div>
<div class="t" style="left:435.9px;top:960px;width:40px;text-align:center;color:#b4b4b4">70</div>
<div class="t" style="left:494.8px;top:960px;width:40px;text-align:center;color:#b4b4b4">80</div>
<div class="t" style="left:553.7px;top:960px;width:40px;text-align:center;color:#b4b4b4">90</div>
<div class="t" style="left:612.6px;top:960px;width:40px;text-align:center;color:#b4b4b4">100</div>
<div class="t" style="left:671.6px;top:960px;width:40px;text-align:center;color:#b4b4b4">110</div>
<div class="t" style="left:730.5px;top:960px;width:40px;text-align:center;color:#b4b4b4">120</div>
<div class="t" style="left:789.4px;top:960px;width:40px;text-align:center;color:#b4b4b4">130</div>
<div class="t" style="left:848.4px;top:960px;width:40px;text-align:center;color:#b4b4b4">140</div>
<div class="t" style="left:907.3px;top:960px;width:40px;text-align:center;color:#b4b4b4">150</div>
<div class="t" style="left:966.2px;top:960px;width:40px;text-align:center;color:#b4b4b4">160</div>
<div class="t" style="left:1025.1px;top:960px;width:40px;text-align:center;color:#b4b4b4">170</div>
<div class="t" style="left:1084.1px;top:960px;width:40px;text-align:center;color:#b4b4b4">180</div>
<div class="t" style="left:1143.0px;top:960px;width:40px;text-align:center;color:#b4b4b4">190</div>
<div class="t" style="left:1201.9px;top:960px;width:40px;text-align:center;color:#b4b4b4">200</div>
<div class="t" style="left:1260.8px;top:960px;width:40px;text-align:center;color:#b4b4b4">210</div>
<div class="t" style="left:1319.8px;top:960px;width:40px;text-align:center;color:#b4b4b4">220</div>
<div class="t" style="left:1378.7px;top:960px;width:40px;text-align:center;color:#b4b4b4">230</div>
<div class="t" style="left:1437.6px;top:960px;width:40px;text-align:center;color:#b4b4b4">240</div>
<div class="t" style="left:1496.5px;top:960px;width:40px;text-align:center;color:#b4b4b4">250</div>
<div class="abs" style="left:1px;top:992px;width:1563px;height:8px;background:#555;border-radius:4px"></div>
<div class="abs" style="left:2.500px;top:993.500px;width:5px;height:5px;background:#2a2a2a;border-radius:3px"></div>
<div class="abs" style="left:1557.500px;top:993.500px;width:5px;height:5px;background:#2a2a2a;border-radius:3px"></div>
<div class="abs" style="left:48px;top:975px;width:2px;height:26px;background:#4772b3"></div>
<div class="abs" style="left:37px;top:958px;width:24px;height:17px;background:#4772b3;border-radius:4px"></div>
<div class="t" style="left:37px;top:959.500px;width:24px;text-align:center;color:#fff">1</div>
<div class="btn" style="left:-3px;top:933px;width:32px;height:19px"></div>
<svg style="left:1px;top:934px" width="28" height="17" viewBox="0 0 28 17"><circle cx="9" cy="8.500" r="7" fill="#e6e6e6"/><path d="M11.500 4.500L7.500 8.800L9.300 12.500" stroke="#2a2a2a" stroke-width="1.600" fill="none"/><use href="#chev" x="19" y="7"/></svg>
<div class="btn" style="left:36px;top:933px;width:131px;height:19px"></div>
<div class="abs" style="left:106px;top:934px;width:1px;height:17px;background:#3a3a3a"></div>
<div class="t" style="left:43px;top:936px">Playback</div>
<svg style="left:96px;top:941px" width="8" height="5"><use href="#chev"/></svg>
<div class="t" style="left:114px;top:936px">Keying</div>
<svg style="left:157px;top:941px" width="8" height="5"><use href="#chev"/></svg>
<div class="t" style="left:177px;top:936px">View</div>
<div class="t" style="left:218px;top:936px">Marker</div>
<div class="abs" style="left:690px;top:933px;width:39px;height:19px;background:#282828;border:1px solid #3a3a3a;border-radius:4px"></div>
<div class="abs" style="left:690px;top:933px;width:19px;height:19px;background:#555;border-radius:4px 0 0 4px"></div>
<svg style="left:690px;top:933px" width="40" height="19" viewBox="0 0 40 19"><circle cx="9.500" cy="9.500" r="4.600" stroke="#c8c8c8" stroke-width="1.100" fill="none"/><path d="M25.500 8L28.500 10.800L31.500 8" stroke="#6a6a6a" stroke-width="1.200" fill="none"/></svg>
<div class="abs" style="left:735px;top:933px;width:119px;height:19px;background:#545454;border-radius:4px"></div>
<div class="abs" style="left:754px;top:933px;width:1px;height:19px;background:#3c3c3c"></div>
<div class="abs" style="left:774px;top:933px;width:1px;height:19px;background:#3c3c3c"></div>
<div class="abs" style="left:794px;top:933px;width:1px;height:19px;background:#3c3c3c"></div>
<div class="abs" style="left:814px;top:933px;width:1px;height:19px;background:#3c3c3c"></div>
<div class="abs" style="left:834px;top:933px;width:1px;height:19px;background:#3c3c3c"></div>
<svg style="left:735px;top:933px" width="119" height="19" viewBox="0 0 119 19" fill="#f0f0f0"><path d="M5 5H6.600V14H5ZM14 5V14L7.500 9.500Z"/><path d="M25 5.500L29 9.500L25 13.500L21 9.500ZM36 5V14L29.800 9.500Z"/><path d="M54 5V14L44.500 9.500Z"/><path d="M64.500 4.500V14.500L74.500 9.500Z" /><path d="M82 5V14L88.200 9.500ZM93 5.500L97 9.500L93 13.500L89 9.500Z"/><path d="M104 5V14L110.500 9.500ZM111.400 5H113V14H111.400Z"/></svg>
<div class="abs" style="left:1295px;top:933px;width:73px;height:19px;background:#545454;border-radius:4px"></div>
<div class="t" style="left:1295px;top:936px;width:73px;text-align:center">1</div>
<div class="abs" style="left:1374px;top:933px;width:194px;height:19px;background:#545454;border-radius:4px"></div>
<div class="abs" style="left:1393px;top:933px;width:1px;height:19px;background:#3c3c3c"></div>
<div class="abs" style="left:1482px;top:933px;width:1px;height:19px;background:#3c3c3c"></div>
<svg style="left:1375px;top:934px" width="18" height="17" viewBox="0 0 18 17"><g stroke="#e6e6e6" stroke-width="1.100" fill="none"><circle cx="8.500" cy="9.500" r="5.300"/><path d="M8.500 6.500V9.800H11M6.500 2.500H10.500M8.500 2.500V4M13 4.500L14.500 3"/></g></svg>
<div class="t" style="left:1409px;top:936px">Start</div>
<div class="t" style="left:1440px;top:936px;width:29px;text-align:right">1</div>
<div class="t" style="left:1498px;top:936px">End</div>
<div class="t" style="left:1525px;top:936px;width:30px;text-align:right">250</div>
<div class="abs" style="left:1568px;top:965px;width:7px;height:26px;background:#2a2a2a;border-radius:3px 0 0 3px"></div>
<svg style="left:1568px;top:972px" width="6" height="9"><path d="M4.500 1L1.500 4.500L4.500 8" stroke="#999" stroke-width="1.100" fill="none"/></svg>
</div>
</div>
<div id="ol" class="abs">
<div id="olhead" class="abs"></div>
<div class="abs" style="left:-1578px;top:-41px;width:0;height:0">
<div class="abs" style="left:1578px;top:88px;width:330px;height:20px;background:#2b2b2b"></div>
<div class="abs" style="left:1578px;top:128px;width:330px;height:20px;background:#2b2b2b"></div>
<div class="abs" style="left:1578px;top:168px;width:330px;height:20px;background:#2b2b2b"></div>
<div class="abs" style="left:1578px;top:208px;width:330px;height:20px;background:#2b2b2b"></div>
<div class="abs" style="left:1578px;top:248px;width:330px;height:20px;background:#2b2b2b"></div>
<div class="abs" style="left:1578px;top:288px;width:330px;height:20px;background:#2b2b2b"></div>
<div class="abs" style="left:1578px;top:328px;width:330px;height:20px;background:#2b2b2b"></div>
<div class="abs" style="left:1578px;top:107px;width:330px;height:20px;background:#2f4576"></div>
<!-- header -->
<div class="btn" style="left:1586px;top:43px;width:32px;height:20px"></div>
<svg style="left:1589px;top:45.500px" width="28" height="16" viewBox="0 0 28 16"><g fill="#e0e0e0"><rect x="2" y="1.500" width="5.500" height="3"/><rect x="8.500" y="6.500" width="6.500" height="3"/><rect x="8.500" y="11.500" width="6.500" height="3"/></g><path d="M4.500 5V13H8M4.500 8H8" stroke="#e0e0e0" stroke-width="1.100" fill="none"/><use href="#chev" x="18.500" y="6"/></svg>
<div class="btn" style="left:1623px;top:43px;width:32px;height:20px"></div>
<svg style="left:1626px;top:45.500px" width="28" height="16" viewBox="0 0 28 16"><g stroke="#d8d8d8" stroke-width="1.100" fill="none"><path d="M2.500 5.500V14.500H11.500"/><path d="M4.500 3.500V12.500H13.500"/></g><rect x="6.500" y="1" width="9.500" height="9.500" fill="#d8d8d8"/><path d="M7.500 9.500L10.500 5L12.500 7.500L13.500 6.500L15 9.500Z" fill="#282828"/><circle cx="13.500" cy="3.800" r="1" fill="#282828"/><use href="#chev" x="18.500" y="6"/></svg>
<div class="dark" style="left:1673px;top:43px;width:119px;height:20px"></div>
<svg style="left:1677px;top:45.500px" width="16" height="16" viewBox="0 0 16 16"><circle cx="9.500" cy="6" r="4.300" stroke="#d8d8d8" stroke-width="1.200" fill="none"/><path d="M6.500 9L1.500 14" stroke="#d8d8d8" stroke-width="1.300"/></svg>
<div class="t" style="left:1699px;top:46.500px;color:#6a6a6a">Search</div>
<div class="btn" style="left:1845px;top:43px;width:32px;height:20px"></div>
<svg style="left:1847px;top:45.500px" width="30" height="16" viewBox="0 0 30 16"><path d="M2 1.500H13L8.800 7V13.500L6.200 12V7Z" stroke="#e0e0e0" stroke-width="1.200" fill="none" stroke-linejoin="round"/><use href="#chev" x="19.500" y="6"/></svg>
<div class="abs" style="left:1882px;top:43px;width:19px;height:20px;background:#545454;border-radius:4px"></div>
<svg style="left:1883px;top:44px" width="18" height="18" viewBox="0 0 18 18"><g stroke="#d0d0d0" stroke-width="1.100" fill="none"><path d="M2.500 7.500V4.500H10"/><rect x="3.500" y="8.500" width="9" height="6.500"/><path d="M6.500 11.500H9.500"/><circle cx="13.200" cy="4.500" r="2.800" fill="#545454"/><path d="M11.700 4.500H14.700M13.200 3V6"/></g></svg>
<!-- rows -->
<svg style="left:1578px;top:66px" width="330" height="64" viewBox="1578 66 330 64">
<g fill="#e0e0e0"><rect x="1601" y="71" width="14" height="3.200"/><path d="M1602 75.500H1614V84.500H1602ZM1606 78V80H1610V78Z" fill-rule="evenodd"/></g>
<path d="M1603.500 95.500L1607.500 99.500L1611.500 95.500" stroke="#c8c8c8" stroke-width="1.200" fill="none"/>
<rect x="1618.500" y="88.500" width="19" height="19" rx="3.500" fill="#484848" stroke="#6a6a6a"/>
<g fill="#e6e6e6"><rect x="1621" y="91" width="14" height="3.200"/><path d="M1622 95.500H1634V104.500H1622ZM1626 98V100H1630V98Z" fill-rule="evenodd"/></g>
<path d="M1607.500 111V124" stroke="#5a6a8a" stroke-width="1"/>
<path d="M1626.500 113L1630.500 117.500L1626.500 122" stroke="#d0d0d0" stroke-width="1.200" fill="none"/>
<rect x="1638.500" y="108.500" width="19" height="18" rx="3.500" fill="#5a6687" stroke="#7f8aa8"/>
<path d="M1641.500 111.500H1654.500L1648 124Z M1645.500 114L1650.500 114L1648 119Z" fill="#e8954a" fill-rule="evenodd"/>
<path d="M1717 123.500L1722.500 117.500A3.600 3.600 0 0 1 1727 112.500L1724.500 115L1725.500 117L1727.800 117.200L1729.500 115A3.600 3.600 0 0 1 1724.500 119.500L1719 125.500Z" stroke="#5b8be0" stroke-width="1.200" fill="none" stroke-linejoin="round"/>
<g stroke="#1fc9a6" stroke-width="1.300" fill="none"><path d="M1736.500 111.500H1747L1741.800 122.500Z"/><rect x="1735" y="110" width="3" height="3" fill="#2f4576"/><rect x="1745.500" y="110" width="3" height="3" fill="#2f4576"/><rect x="1740.300" y="121" width="3" height="3" fill="#2f4576"/></g>
<!-- right icons --><g transform="translate(0 -.700)">
<rect x="1845" y="92.500" width="10" height="10" rx="1" fill="#f0f0f0"/><path d="M1847 97.500L1849.300 100L1853.200 94.800" stroke="#222" stroke-width="1.500" fill="none"/>
<g id="eye"><path d="M1863 97.500C1866 92.500 1873 92.500 1876 97.500C1873 102.500 1866 102.500 1863 97.500Z" fill="#f0f0f0"/><circle cx="1869.500" cy="97.200" r="2.800" fill="#282828"/><circle cx="1869.500" cy="97.200" r="1.300" fill="#f0f0f0"/></g>
<g id="cam"><path d="M1883 94.500H1886L1887 92.500H1892L1893 94.500H1896V103H1883Z" fill="#f0f0f0"/><circle cx="1889.500" cy="98.500" r="3.300" fill="#282828"/><circle cx="1889.500" cy="98.500" r="2" fill="none" stroke="#f0f0f0" stroke-width="1"/></g>
<use href="#eye" y="20"/><use href="#cam" y="20"/></g>
</svg>
<div class="t" style="left:1622px;top:71px">Scene Collection</div>
<div class="t" style="left:1642px;top:91px">Collection</div>
<div class="t" style="left:1662px;top:111px;color:#f2a230">Circle</div>
</div>

</div>
<div id="pr" class="abs">
<div id="prtabs" class="abs"></div>
<div class="abs" style="left:-1578px;top:-351px;width:0;height:0">
<div class="btn" style="left:1586px;top:353px;width:31px;height:19px"></div>
<svg style="left:1589px;top:355px" width="28" height="16" viewBox="0 0 28 16"><rect x="1.500" y="1.500" width="13" height="5.400" rx="2.700" fill="#e6e6e6"/><rect x="7.500" y="2.800" width="5.800" height="2.800" rx="1.400" fill="#282828"/><rect x="1.500" y="9" width="13" height="5.400" rx="2.700" fill="#e6e6e6"/><path d="M10.500 10.300H11.900A1.400 1.400 0 0 1 11.900 13.100H10.500Z" fill="#282828"/><use href="#chev" x="18.500" y="6.500"/></svg>
<div class="dark" style="left:1686px;top:353px;width:118px;height:19px"></div>
<svg style="left:1689px;top:355px" width="16" height="16" viewBox="0 0 16 16"><circle cx="9.500" cy="6" r="4.300" stroke="#d8d8d8" stroke-width="1.200" fill="none"/><path d="M6.500 9L1.500 14" stroke="#d8d8d8" stroke-width="1.300"/></svg>
<div class="t" style="left:1711px;top:356px;color:#6a6a6a">Search</div>
<div class="btn" style="left:1882px;top:353px;width:19px;height:19px"></div>
<svg style="left:1888px;top:361px" width="8" height="5"><use href="#chev"/></svg>
<div class="abs" style="left:1580px;top:605px;width:26px;height:27px;background:#303030;border-radius:4px 0 0 4px"></div>
<svg style="left:1617px;top:387px" width="15" height="15" viewBox="0 0 15 15"><rect x="3.500" y="3.500" width="8" height="8" fill="#e6e6e6"/><path d="M.700 4V.700H4M11 .700H14.300V4M14.300 11V14.300H11M4 14.300H.700V11" stroke="#d0d0d0" stroke-width="1.100" fill="none"/></svg>
<div class="t" style="left:1640px;top:387px">Circle</div>
<svg style="left:1885px;top:386px" width="16" height="16" viewBox="0 0 16 16"><path d="M1.500 15L6.500 10M4 6.500L10 12.500M5.500 7.500L10.500 2.500L14 6L9 11" stroke="#a8a8a8" stroke-width="1.100" fill="none"/></svg>
<div class="abs" style="left:1614px;top:420px;width:288px;height:20px;background:#1d1d1d;border:1px solid #3d3d3d;border-radius:4px"></div>
<div class="abs" style="left:1615px;top:421px;width:30px;height:18px;background:#282828;border-right:1px solid #3d3d3d;border-radius:3px 0 0 3px"></div>
<svg style="left:1618px;top:423px" width="28" height="15" viewBox="0 0 28 15"><rect x="3.500" y="3.500" width="8" height="8" fill="#e6e6e6"/><path d="M.700 4V.700H4M11 .700H14.300V4M14.300 11V14.300H11M4 14.300H.700V11" stroke="#d0d0d0" stroke-width="1.100" fill="none"/><use href="#chev" x="17.500" y="5.500"/></svg>
<div class="t" style="left:1653px;top:423px">Circle</div>
<div class="panel" style="left:1614px;top:450px;height:281px"></div>
<svg style="left:1622px;top:460px" width="10" height="8"><path d="M1 1.500L5 5.500L9 1.500" stroke="#c8c8c8" stroke-width="1.200" fill="none"/></svg>
<div class="t" style="left:1636px;top:456px">Transform</div>
<svg style="left:1884px;top:460px" width="12" height="6" viewBox="0 0 12 6"><rect x="0.5" y="0.5" width="1.300" height="1.300" fill="#8a8a8a"/><rect x="0.5" y="3.5" width="1.300" height="1.300" fill="#8a8a8a"/><rect x="3.5" y="0.5" width="1.300" height="1.300" fill="#8a8a8a"/><rect x="3.5" y="3.5" width="1.300" height="1.300" fill="#8a8a8a"/><rect x="6.5" y="0.5" width="1.300" height="1.300" fill="#8a8a8a"/><rect x="6.5" y="3.5" width="1.300" height="1.300" fill="#8a8a8a"/><rect x="9.5" y="0.5" width="1.300" height="1.300" fill="#8a8a8a"/><rect x="9.5" y="3.5" width="1.300" height="1.300" fill="#8a8a8a"/></svg>
<div class="abs" style="left:1728px;top:484px;width:125px;height:59px;background:#3d3d3d;border-radius:4px;overflow:hidden">
<div class="fld" style="left:0;top:0px;width:125px">0 mm</div>
<div class="fld" style="left:0;top:20px;width:125px">0 mm</div>
<div class="fld" style="left:0;top:40px;width:125px">0 mm</div>
</div>
<div class="t" style="left:1618px;width:99px;text-align:right;top:487px">Location X</div>
<svg style="left:1857px;top:485px" width="16" height="16" viewBox="0 0 16 16"><g stroke="#c8c8c8" stroke-width="1" fill="none"><rect x="6.500" y="7.500" width="8" height="6" rx=".800"/><path d="M1.500 8V5.500A2.700 2.700 0 0 1 7 5.500V7.500"/><path d="M9.800 10.500H11.200"/></g></svg>
<div class="abs" style="left:1882px;top:492px;width:4px;height:4px;border-radius:2px;background:#e0e0e0"></div>
<div class="t" style="left:1618px;width:99px;text-align:right;top:507px">Y</div>
<svg style="left:1857px;top:505px" width="16" height="16" viewBox="0 0 16 16"><g stroke="#c8c8c8" stroke-width="1" fill="none"><rect x="6.500" y="7.500" width="8" height="6" rx=".800"/><path d="M1.500 8V5.500A2.700 2.700 0 0 1 7 5.500V7.500"/><path d="M9.800 10.500H11.200"/></g></svg>
<div class="abs" style="left:1882px;top:512px;width:4px;height:4px;border-radius:2px;background:#e0e0e0"></div>
<div class="t" style="left:1618px;width:99px;text-align:right;top:527px">Z</div>
<svg style="left:1857px;top:525px" width="16" height="16" viewBox="0 0 16 16"><g stroke="#c8c8c8" stroke-width="1" fill="none"><rect x="6.500" y="7.500" width="8" height="6" rx=".800"/><path d="M1.500 8V5.500A2.700 2.700 0 0 1 7 5.500V7.500"/><path d="M9.800 10.500H11.200"/></g></svg>
<div class="abs" style="left:1882px;top:532px;width:4px;height:4px;border-radius:2px;background:#e0e0e0"></div>
<div class="abs" style="left:1728px;top:549px;width:125px;height:59px;background:#3d3d3d;border-radius:4px;overflow:hidden">
<div class="fld" style="left:0;top:0px;width:125px">0°</div>
<div class="fld" style="left:0;top:20px;width:125px">0°</div>
<div class="fld" style="left:0;top:40px;width:125px">0°</div>
</div>
<div class="t" style="left:1618px;width:99px;text-align:right;top:552px">Rotation X</div>
<svg style="left:1857px;top:550px" width="16" height="16" viewBox="0 0 16 16"><g stroke="#c8c8c8" stroke-width="1" fill="none"><rect x="6.500" y="7.500" width="8" height="6" rx=".800"/><path d="M1.500 8V5.500A2.700 2.700 0 0 1 7 5.500V7.500"/><path d="M9.800 10.500H11.200"/></g></svg>
<div class="abs" style="left:1882px;top:557px;width:4px;height:4px;border-radius:2px;background:#e0e0e0"></div>
<div class="t" style="left:1618px;width:99px;text-align:right;top:572px">Y</div>
<svg style="left:1857px;top:570px" width="16" height="16" viewBox="0 0 16 16"><g stroke="#c8c8c8" stroke-width="1" fill="none"><rect x="6.500" y="7.500" width="8" height="6" rx=".800"/><path d="M1.500 8V5.500A2.700 2.700 0 0 1 7 5.500V7.500"/><path d="M9.800 10.500H11.200"/></g></svg>
<div class="abs" style="left:1882px;top:577px;width:4px;height:4px;border-radius:2px;background:#e0e0e0"></div>
<div class="t" style="left:1618px;width:99px;text-align:right;top:592px">Z</div>
<svg style="left:1857px;top:590px" width="16" height="16" viewBox="0 0 16 16"><g stroke="#c8c8c8" stroke-width="1" fill="none"><rect x="6.500" y="7.500" width="8" height="6" rx=".800"/><path d="M1.500 8V5.500A2.700 2.700 0 0 1 7 5.500V7.500"/><path d="M9.800 10.500H11.200"/></g></svg>
<div class="abs" style="left:1882px;top:597px;width:4px;height:4px;border-radius:2px;background:#e0e0e0"></div>
<div class="abs" style="left:1728px;top:614px;width:125px;height:19px;background:#282828;border:1px solid #3a3a3a;border-radius:4px"></div>
<div class="t" style="left:1735px;top:616px">XYZ Euler</div>
<svg style="left:1842px;top:621px" width="8" height="5"><use href="#chev"/></svg>
<div class="t" style="left:1618px;width:99px;text-align:right;top:617px">Mode</div>
<div class="abs" style="left:1882px;top:622px;width:4px;height:4px;border-radius:2px;background:#e0e0e0"></div>
<div class="abs" style="left:1728px;top:639px;width:125px;height:59px;background:#3d3d3d;border-radius:4px;overflow:hidden">
<div class="fld" style="left:0;top:0px;width:125px">1.000</div>
<div class="fld" style="left:0;top:20px;width:125px">1.000</div>
<div class="fld" style="left:0;top:40px;width:125px">1.000</div>
</div>
<div class="t" style="left:1618px;width:99px;text-align:right;top:642px">Scale X</div>
<svg style="left:1857px;top:640px" width="16" height="16" viewBox="0 0 16 16"><g stroke="#c8c8c8" stroke-width="1" fill="none"><rect x="6.500" y="7.500" width="8" height="6" rx=".800"/><path d="M1.500 8V5.500A2.700 2.700 0 0 1 7 5.500V7.500"/><path d="M9.800 10.500H11.200"/></g></svg>
<div class="abs" style="left:1882px;top:647px;width:4px;height:4px;border-radius:2px;background:#e0e0e0"></div>
<div class="t" style="left:1618px;width:99px;text-align:right;top:662px">Y</div>
<svg style="left:1857px;top:660px" width="16" height="16" viewBox="0 0 16 16"><g stroke="#c8c8c8" stroke-width="1" fill="none"><rect x="6.500" y="7.500" width="8" height="6" rx=".800"/><path d="M1.500 8V5.500A2.700 2.700 0 0 1 7 5.500V7.500"/><path d="M9.800 10.500H11.200"/></g></svg>
<div class="abs" style="left:1882px;top:667px;width:4px;height:4px;border-radius:2px;background:#e0e0e0"></div>
<div class="t" style="left:1618px;width:99px;text-align:right;top:682px">Z</div>
<svg style="left:1857px;top:680px" width="16" height="16" viewBox="0 0 16 16"><g stroke="#c8c8c8" stroke-width="1" fill="none"><rect x="6.500" y="7.500" width="8" height="6" rx=".800"/><path d="M1.500 8V5.500A2.700 2.700 0 0 1 7 5.500V7.500"/><path d="M9.800 10.500H11.200"/></g></svg>
<div class="abs" style="left:1882px;top:687px;width:4px;height:4px;border-radius:2px;background:#e0e0e0"></div>
<svg style="left:1638px;top:714px" width="7" height="11"><use href="#chevr"/></svg>
<div class="t" style="left:1650px;top:712px">Delta Transform</div>
<div class="panel" style="left:1614px;top:733px"></div>
<svg style="left:1624px;top:740px" width="7" height="11"><use href="#chevr"/></svg>
<div class="t" style="left:1636px;top:739px">Relations</div>
<svg style="left:1884px;top:743px" width="12" height="6" viewBox="0 0 12 6"><rect x="0.5" y="0.5" width="1.300" height="1.300" fill="#8a8a8a"/><rect x="0.5" y="3.5" width="1.300" height="1.300" fill="#8a8a8a"/><rect x="3.5" y="0.5" width="1.300" height="1.300" fill="#8a8a8a"/><rect x="3.5" y="3.5" width="1.300" height="1.300" fill="#8a8a8a"/><rect x="6.5" y="0.5" width="1.300" height="1.300" fill="#8a8a8a"/><rect x="6.5" y="3.5" width="1.300" height="1.300" fill="#8a8a8a"/><rect x="9.5" y="0.5" width="1.300" height="1.300" fill="#8a8a8a"/><rect x="9.5" y="3.5" width="1.300" height="1.300" fill="#8a8a8a"/></svg>
<div class="panel" style="left:1614px;top:760px"></div>
<svg style="left:1624px;top:767px" width="7" height="11"><use href="#chevr"/></svg>
<div class="t" style="left:1636px;top:766px">Collections</div>
<svg style="left:1884px;top:770px" width="12" height="6" viewBox="0 0 12 6"><rect x="0.5" y="0.5" width="1.300" height="1.300" fill="#8a8a8a"/><rect x="0.5" y="3.5" width="1.300" height="1.300" fill="#8a8a8a"/><rect x="3.5" y="0.5" width="1.300" height="1.300" fill="#8a8a8a"/><rect x="3.5" y="3.5" width="1.300" height="1.300" fill="#8a8a8a"/><rect x="6.5" y="0.5" width="1.300" height="1.300" fill="#8a8a8a"/><rect x="6.5" y="3.5" width="1.300" height="1.300" fill="#8a8a8a"/><rect x="9.5" y="0.5" width="1.300" height="1.300" fill="#8a8a8a"/><rect x="9.5" y="3.5" width="1.300" height="1.300" fill="#8a8a8a"/></svg>
<div class="panel" style="left:1614px;top:787px"></div>
<svg style="left:1624px;top:794px" width="7" height="11"><use href="#chevr"/></svg>
<div class="t" style="left:1636px;top:793px">Instancing</div>
<svg style="left:1884px;top:797px" width="12" height="6" viewBox="0 0 12 6"><rect x="0.5" y="0.5" width="1.300" height="1.300" fill="#8a8a8a"/><rect x="0.5" y="3.5" width="1.300" height="1.300" fill="#8a8a8a"/><rect x="3.5" y="0.5" width="1.300" height="1.300" fill="#8a8a8a"/><rect x="3.5" y="3.5" width="1.300" height="1.300" fill="#8a8a8a"/><rect x="6.5" y="0.5" width="1.300" height="1.300" fill="#8a8a8a"/><rect x="6.5" y="3.5" width="1.300" height="1.300" fill="#8a8a8a"/><rect x="9.5" y="0.5" width="1.300" height="1.300" fill="#8a8a8a"/><rect x="9.5" y="3.5" width="1.300" height="1.300" fill="#8a8a8a"/></svg>
<div class="panel" style="left:1614px;top:814px"></div>
<svg style="left:1624px;top:821px" width="7" height="11"><use href="#chevr"/></svg>
<div class="t" style="left:1636px;top:820px">Motion Paths</div>
<svg style="left:1884px;top:824px" width="12" height="6" viewBox="0 0 12 6"><rect x="0.5" y="0.5" width="1.300" height="1.300" fill="#8a8a8a"/><rect x="0.5" y="3.5" width="1.300" height="1.300" fill="#8a8a8a"/><rect x="3.5" y="0.5" width="1.300" height="1.300" fill="#8a8a8a"/><rect x="3.5" y="3.5" width="1.300" height="1.300" fill="#8a8a8a"/><rect x="6.5" y="0.5" width="1.300" height="1.300" fill="#8a8a8a"/><rect x="6.5" y="3.5" width="1.300" height="1.300" fill="#8a8a8a"/><rect x="9.5" y="0.5" width="1.300" height="1.300" fill="#8a8a8a"/><rect x="9.5" y="3.5" width="1.300" height="1.300" fill="#8a8a8a"/></svg>
<div class="panel" style="left:1614px;top:841px"></div>
<svg style="left:1624px;top:848px" width="7" height="11"><use href="#chevr"/></svg>
<div class="t" style="left:1636px;top:847px">Visibility</div>
<svg style="left:1884px;top:851px" width="12" height="6" viewBox="0 0 12 6"><rect x="0.5" y="0.5" width="1.300" height="1.300" fill="#8a8a8a"/><rect x="0.5" y="3.5" width="1.300" height="1.300" fill="#8a8a8a"/><rect x="3.5" y="0.5" width="1.300" height="1.300" fill="#8a8a8a"/><rect x="3.5" y="3.5" width="1.300" height="1.300" fill="#8a8a8a"/><rect x="6.5" y="0.5" width="1.300" height="1.300" fill="#8a8a8a"/><rect x="6.5" y="3.5" width="1.300" height="1.300" fill="#8a8a8a"/><rect x="9.5" y="0.5" width="1.300" height="1.300" fill="#8a8a8a"/><rect x="9.5" y="3.5" width="1.300" height="1.300" fill="#8a8a8a"/></svg>
<div class="panel" style="left:1614px;top:868px"></div>
<svg style="left:1624px;top:875px" width="7" height="11"><use href="#chevr"/></svg>
<div class="t" style="left:1636px;top:874px">Viewport Display</div>
<svg style="left:1884px;top:878px" width="12" height="6" viewBox="0 0 12 6"><rect x="0.5" y="0.5" width="1.300" height="1.300" fill="#8a8a8a"/><rect x="0.5" y="3.5" width="1.300" height="1.300" fill="#8a8a8a"/><rect x="3.5" y="0.5" width="1.300" height="1.300" fill="#8a8a8a"/><rect x="3.5" y="3.5" width="1.300" height="1.300" fill="#8a8a8a"/><rect x="6.5" y="0.5" width="1.300" height="1.300" fill="#8a8a8a"/><rect x="6.5" y="3.5" width="1.300" height="1.300" fill="#8a8a8a"/><rect x="9.5" y="0.5" width="1.300" height="1.300" fill="#8a8a8a"/><rect x="9.5" y="3.5" width="1.300" height="1.300" fill="#8a8a8a"/></svg>
<div class="panel" style="left:1614px;top:895px"></div>
<svg style="left:1624px;top:902px" width="7" height="11"><use href="#chevr"/></svg>
<div class="t" style="left:1636px;top:901px">Line Art</div>
<svg style="left:1884px;top:905px" width="12" height="6" viewBox="0 0 12 6"><rect x="0.5" y="0.5" width="1.300" height="1.300" fill="#8a8a8a"/><rect x="0.5" y="3.5" width="1.300" height="1.300" fill="#8a8a8a"/><rect x="3.5" y="0.5" width="1.300" height="1.300" fill="#8a8a8a"/><rect x="3.5" y="3.5" width="1.300" height="1.300" fill="#8a8a8a"/><rect x="6.5" y="0.5" width="1.300" height="1.300" fill="#8a8a8a"/><rect x="6.5" y="3.5" width="1.300" height="1.300" fill="#8a8a8a"/><rect x="9.5" y="0.5" width="1.300" height="1.300" fill="#8a8a8a"/><rect x="9.5" y="3.5" width="1.300" height="1.300" fill="#8a8a8a"/></svg>
<div class="panel" style="left:1614px;top:922px"></div>
<svg style="left:1624px;top:929px" width="7" height="11"><use href="#chevr"/></svg>
<div class="t" style="left:1636px;top:928px">Custom Properties</div>
<svg style="left:1884px;top:932px" width="12" height="6" viewBox="0 0 12 6"><rect x="0.5" y="0.5" width="1.300" height="1.300" fill="#8a8a8a"/><rect x="0.5" y="3.5" width="1.300" height="1.300" fill="#8a8a8a"/><rect x="3.5" y="0.5" width="1.300" height="1.300" fill="#8a8a8a"/><rect x="3.5" y="3.5" width="1.300" height="1.300" fill="#8a8a8a"/><rect x="6.5" y="0.5" width="1.300" height="1.300" fill="#8a8a8a"/><rect x="6.5" y="3.5" width="1.300" height="1.300" fill="#8a8a8a"/><rect x="9.5" y="0.5" width="1.300" height="1.300" fill="#8a8a8a"/><rect x="9.5" y="3.5" width="1.300" height="1.300" fill="#8a8a8a"/></svg>
<div class="abs sep" style="top:412px"></div><div class="abs sep" style="top:560px"></div><div class="abs sep" style="top:597px"></div><div class="abs sep" style="top:800px"></div><div class="abs sep" style="top:836px"></div>
<svg style="left:1578px;top:376px" width="28" height="470" viewBox="1578 376 28 470">
<!-- tool 398 -->
<g fill="#c6c6c6"><rect x="1587.500" y="391" width="1.200" height="6"/><path d="M1586 398H1590.500V402.500A2.200 2.200 0 0 1 1586 402.500Z"/><path d="M1594.500 390.500V394L1596.500 395.500L1598.500 394V390.500A3.600 3.600 0 0 1 1597.800 397.500V403.500A1.300 1.300 0 0 1 1595.200 403.500V397.500A3.600 3.600 0 0 1 1594.500 390.500Z"/></g>
<!-- render 433 -->
<g fill="#c6c6c6"><path d="M1586 428.500H1600V439.500H1586ZM1587.500 431V437.500H1595.500V431Z" fill-rule="evenodd"/><rect x="1588.500" y="432.500" width="6" height="1"/><rect x="1588.500" y="435" width="6" height="1"/><path d="M1589 428V426.500H1593V428"/><circle cx="1597.800" cy="431.800" r=".9" fill="#1c1c1c"/><circle cx="1597.800" cy="435.800" r=".9" fill="#1c1c1c"/></g>
<!-- output 461 -->
<g fill="#c6c6c6"><path d="M1586 455.500H1600V461.500H1598V458.500H1588V461.500H1586Z"/><path d="M1589 460H1597V467.500H1589ZM1590.500 466L1593 462.500L1595.500 466Z" fill-rule="evenodd"/></g>
<!-- view layer 489 -->
<g stroke="#c6c6c6" stroke-width="1.100" fill="none"><path d="M1586.500 486.500V495.500H1595.500"/><path d="M1588.500 484.500V493.500H1597.500"/></g><rect x="1590.500" y="482" width="9.500" height="9.500" fill="#c6c6c6"/><path d="M1591.500 490.500L1594.500 486L1596.500 488.500L1597.500 487.500L1599 490.500Z" fill="#1c1c1c"/><circle cx="1597.500" cy="484.800" r="1" fill="#1c1c1c"/>
<!-- scene 517 -->
<path d="M1585.500 521.500L1589.500 510.500L1593 521.500Z" fill="#c6c6c6"/><circle cx="1597.500" cy="512.500" r="2" fill="#c6c6c6"/><circle cx="1596.500" cy="520.500" r="3.300" fill="#1c1c1c" stroke="#c6c6c6" stroke-width="1.100"/>
<!-- world 545 -->
<circle cx="1593" cy="545.500" r="6.300" fill="none" stroke="#d2545e" stroke-width="1.300"/><path d="M1588.500 542C1591 541 1592.500 543 1592 545C1591.500 547 1594 547.500 1594.500 549.500C1593 551.500 1589 550 1588.500 547ZM1594 540.500C1596 540.500 1598 542 1598.500 544.500C1597 545.500 1595 544 1594 540.500Z" fill="#d2545e"/><path d="M1598.500 539L1600 537.500" stroke="#d2545e" stroke-width="1.200"/>
<!-- collection 582 -->
<g fill="#e0e0e0"><path d="M1586 576H1600V579.500H1586ZM1587.200 577V578.500H1598.800V577Z" fill-rule="evenodd"/><path d="M1587 580.500H1599V588.500H1587ZM1588.300 581.500V587.200H1597.700V581.500ZM1591.500 583H1594.500V584.800H1591.500Z" fill-rule="evenodd"/></g>
<!-- object 618 -->
<rect x="1589" y="614" width="8.500" height="8.500" fill="#e8964a"/><path d="M1586.200 614.500V611.700H1589M1597.500 611.700H1600.300V614.500M1600.300 622V624.800H1597.500M1589 624.800H1586.200V622" stroke="#e8964a" stroke-width="1.100" fill="none"/>
<!-- modifiers 646 -->
<path d="M1586.500 651.500L1592.500 645.500A4 4 0 0 1 1597.500 639.800L1594.800 642.500L1595.500 644.500L1597.800 645.200L1600.300 642.700A4 4 0 0 1 1594.800 647.800L1588.800 653.800A1.500 1.500 0 0 1 1586.500 651.500Z" fill="#5b8be0"/>
<!-- particles 674 -->
<g stroke="#5b8be0" stroke-width="1.100" fill="#5b8be0"><path d="M1588 669H1598M1588 669V680M1588 669L1598 680" fill="none"/><circle cx="1588" cy="669" r="2"/><circle cx="1598.500" cy="669" r="1.300"/><circle cx="1588" cy="680" r="1.300"/><circle cx="1598.500" cy="680" r="1.600"/></g>
<!-- physics 702 -->
<circle cx="1592.500" cy="703" r="2.600" fill="#5b8be0"/><path d="M1596.500 698A6.300 6.300 0 1 0 1598.500 706" stroke="#5b8be0" stroke-width="1.200" fill="none"/><circle cx="1598.300" cy="697.300" r="1.500" fill="#5b8be0"/>
<!-- constraints 730 -->
<g stroke="#5b8be0" fill="none"><path d="M1587 731A5.500 5.500 0 0 0 1596.500 735L1600 727L1596 724.500A6 6 0 0 0 1587 731Z" stroke-width="1.300"/><circle cx="1592" cy="731" r="2.200" stroke-width="1.600"/></g>
<!-- data 758 -->
<g stroke="#1fc9a6" stroke-width="1.300" fill="none"><path d="M1587.500 752.500H1598.500L1593 764Z"/><rect x="1586" y="751" width="3" height="3" fill="#1c1c1c"/><rect x="1597" y="751" width="3" height="3" fill="#1c1c1c"/><rect x="1591.500" y="762.500" width="3" height="3" fill="#1c1c1c"/></g>
<!-- material 786 -->
<circle cx="1593" cy="786" r="6.300" fill="none" stroke="#d2606a" stroke-width="1.200"/><path d="M1593 786V779.700A6.300 6.300 0 0 0 1586.700 786ZM1593 786H1599.300A6.300 6.300 0 0 1 1588.500 790.500Z" fill="#d2606a"/>
<!-- texture 822 -->
<g fill="#d2606a"><rect x="1586.500" y="815.500" width="13" height="13" fill="none" stroke="#d2606a" stroke-width="1"/><rect x="1586.500" y="815.500" width="3.250" height="3.250"/><rect x="1593" y="815.500" width="3.250" height="3.250"/><rect x="1589.750" y="818.750" width="3.250" height="3.250"/><rect x="1596.250" y="818.750" width="3.250" height="3.250"/><rect x="1586.500" y="822" width="3.250" height="3.250"/><rect x="1593" y="822" width="3.250" height="3.250"/><rect x="1589.750" y="825.250" width="3.250" height="3.250"/><rect x="1596.250" y="825.250" width="3.250" height="3.250"/></g>
</svg>

</div>
</div>
<!-- title bar -->
<div class="abs" style="left:0;top:0;width:1908px;height:14px;overflow:hidden">
<div class="t" style="left:14px;top:-5px;font-size:11.9px;line-height:16px;height:16px;color:#8c8c8c">* Baumnackt [C:\Users\Marie\OneDrive\Bilder\blender textur\Baumnackt.blend] - Blender 4.2.3 LTS</div>
<svg style="left:0;top:0" width="1908" height="14"><circle cx="0" cy="1" r="7.200" fill="#e87d0d"/><circle cx="1.500" cy="2.800" r="3.600" fill="#fff"/><circle cx="2" cy="2.800" r="2" fill="#265787"/>
<path d="M1789 1.500H1799" stroke="#9a9a9a" stroke-width="1"/><path d="M1834.500 0V5.500H1841.500V0M1844.500 0V3.500" stroke="#9a9a9a" stroke-width="1" fill="none"/><path d="M1884.800 .300L1880 5.800M1884.800 .300L1889.800 5.800" stroke="#9a9a9a" stroke-width="1" fill="none"/></svg>
</div>
<!-- blender logo -->
<svg style="left:0;top:19px" width="17" height="17" viewBox="0 19 17 17"><g stroke="#e4e4e4" fill="none" stroke-linecap="round"><circle cx="9.400" cy="28.400" r="4.400" stroke-width="2.700"/><path d="M1.600 24.300H9.500M7.300 20.800L12 23.800M0 30.400L5.400 25.600" stroke-width="1.800"/></g><circle cx="9.400" cy="28.400" r="1.600" fill="#dcdcdc"/></svg>
<div class="t" style="left:25px;top:20px">File</div>
<div class="t" style="left:59px;top:20px">Edit</div>
<div class="t" style="left:95px;top:20px">Render</div>
<div class="t" style="left:147px;top:20px">Window</div>
<div class="t" style="left:206px;top:20px">Help</div>
<!-- workspace tabs -->
<div class="abs" style="left:255px;top:20px;width:54px;height:21px;background:#303030;border-radius:4px 4px 0 0"></div>
<div class="abs tabi" style="left:311px;width:68px"></div>
<div class="abs tabi" style="left:381px;width:69px"></div>
<div class="abs tabi" style="left:452px;width:75px"></div>
<div class="abs tabi" style="left:529px;width:88px"></div>
<div class="abs tabi" style="left:619px;width:62px"></div>
<div class="abs tabi" style="left:683px;width:73px"></div>
<div class="abs tabi" style="left:758px;width:72px"></div>
<div class="abs tabi" style="left:832px;width:87px"></div>
<div class="abs tabi" style="left:921px;width:106px"></div>
<div class="abs tabi" style="left:1029px;width:66px"></div>
<div class="abs tabi" style="left:1097px;width:18px"></div>
<div class="t" style="left:264px;top:23px;color:#fff">Layout</div>
<div class="t tb" style="left:320px">Modeling</div>
<div class="t tb" style="left:390px">Sculpting</div>
<div class="t tb" style="left:461px">UV Editing</div>
<div class="t tb" style="left:538px">Texture Paint</div>
<div class="t tb" style="left:628px">Shading</div>
<div class="t tb" style="left:692px">Animation</div>
<div class="t tb" style="left:767px">Rendering</div>
<div class="t tb" style="left:841px">Compositing</div>
<div class="t tb" style="left:930px">Geometry Nodes</div>
<div class="t tb" style="left:1038px">Scripting</div>
<svg style="left:1101px;top:25px" width="10" height="10"><path d="M5 .500V9.500M.500 5H9.500" stroke="#b0b0b0" stroke-width="1.200"/></svg>
<!-- scene selector -->
<div class="abs" style="left:1573px;top:17px;width:171px;height:20px;background:#282828;border:1px solid #3a3a3a;border-radius:4px"></div>
<div class="abs" style="left:1605px;top:18px;width:100px;height:18px;background:#1d1d1d"></div>
<div class="abs" style="left:1705px;top:18px;width:20px;height:18px;background:#545454"></div>
<svg style="left:1573px;top:17px" width="171" height="20" viewBox="0 0 171 20"><path d="M6 13.500L9 4.500L12 13.500Z" fill="#d8d8d8"/><circle cx="15.800" cy="6" r="1.700" fill="#d8d8d8"/><circle cx="15.500" cy="13.500" r="3" fill="none" stroke="#d8d8d8" stroke-width="1.100"/><use href="#chev" x="21.500" y="8.500"/>
<path d="M113.500 17L118.500 12M116 8.500L122 14.500M117.500 9.500L122 5L125.500 8.500L121 13" stroke="#a8a8a8" stroke-width="1.100" fill="none"/>
<g stroke="#e6e6e6" stroke-width="1.100" fill="none"><path d="M137.500 6.500V4.500H146.500V13.500H144.500"/><path d="M135.500 6.500H141.500L144.500 9.500V16.500H135.500Z"/></g>
<path d="M158.500 6.500L165.500 13.500M165.500 6.500L158.500 13.500" stroke="#5a5a5a" stroke-width="1.200"/></svg>
<div class="t" style="left:1612px;top:20px">Scene</div>
<!-- viewlayer selector -->
<div class="abs" style="left:1751px;top:17px;width:151px;height:20px;background:#282828;border:1px solid #3a3a3a;border-radius:4px"></div>
<div class="abs" style="left:1782px;top:18px;width:80px;height:18px;background:#1d1d1d"></div>
<div class="abs" style="left:1862px;top:18px;width:20px;height:18px;background:#545454"></div>
<svg style="left:1751px;top:17px" width="151" height="20" viewBox="0 0 151 20"><g stroke="#d8d8d8" stroke-width="1.100" fill="none"><path d="M5.500 8.500V15.500H14.500"/><path d="M7.500 6.500V13.500H16.500"/><rect x="9.500" y="4.500" width="9" height="7" fill="#d8d8d8"/></g><path d="M10.500 10.500L13 7.500L15 9.500L16.200 8.500L17.500 10.500Z" fill="#282828"/><use href="#chev" x="21" y="8.500"/>
<g stroke="#e6e6e6" stroke-width="1.100" fill="none"><path d="M117.500 6.500V4.500H126.500V13.500H124.500"/><path d="M115.500 6.500H121.500L124.500 9.500V16.500H115.500Z"/></g>
<path d="M138.500 6.500L145.500 13.500M145.500 6.500L138.500 13.500" stroke="#5a5a5a" stroke-width="1.200"/></svg>
<div class="t" style="left:1789px;top:20px">ViewLayer</div>

</body>
</html>
